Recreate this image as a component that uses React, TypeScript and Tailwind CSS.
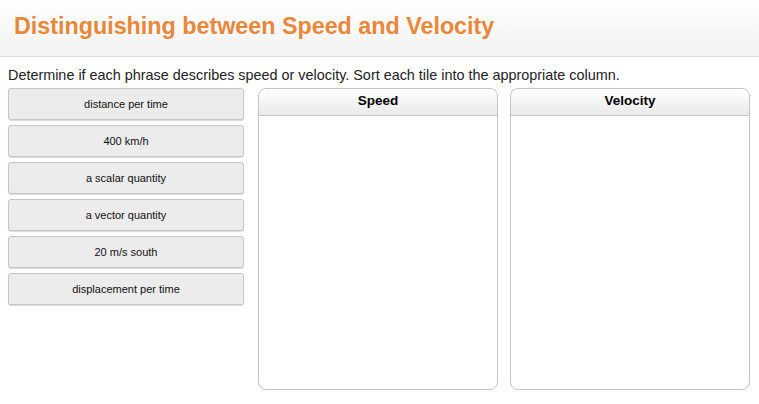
import React from "react";

const tiles = [
  "distance per time",
  "400 km/h",
  "a scalar quantity",
  "a vector quantity",
  "20 m/s south",
  "displacement per time",
];

function Column({ title }: { title: string }) {
  return (
    <div className="flex h-[302px] w-[240px] flex-col rounded-[8px] border border-[#c4c4c4] bg-white">
      <div className="flex h-[27px] items-start justify-center rounded-t-[8px] border-b border-[#c8c8c8] bg-gradient-to-b from-white to-[#e9e9e9] pt-[3px] text-[13.5px] font-bold leading-[18px] text-black">
        {title}
      </div>
    </div>
  );
}

export default function App() {
  return (
    <div className="h-[404px] w-[759px] bg-white" style={{ fontFamily: '"Liberation Sans", Arial, sans-serif' }}>
      <div className="h-[57px] border-b border-[#dcdcdc] bg-gradient-to-b from-white to-[#f2f2f2] pl-[14px] pt-[12px]">
        <h1 className="text-[23.3px] font-bold leading-[28px] text-[#e8883a]">
          Distinguishing between Speed and Velocity
        </h1>
      </div>
      <p className="mt-[10px] pl-[8px] text-[14.4px] leading-[17px] text-[#222]">
        Determine if each phrase describes speed or velocity. Sort each tile into the appropriate column.
      </p>
      <div className="mt-[4px] flex pl-[8px]">
        <div className="flex w-[236px] flex-col gap-[5px]">
          {tiles.map((t) => (
            <div
              key={t}
              className="flex h-[32px] items-center justify-center rounded-[3px] border border-[#c6c6c6] bg-[#ececec] text-[11px] text-[#111] shadow-[0_1px_1px_rgba(0,0,0,0.15)]"
            >
              {t}
            </div>
          ))}
        </div>
        <div className="ml-[14px] flex gap-[12px]">
          <Column title="Speed" />
          <Column title="Velocity" />
        </div>
      </div>
    </div>
  );
}
